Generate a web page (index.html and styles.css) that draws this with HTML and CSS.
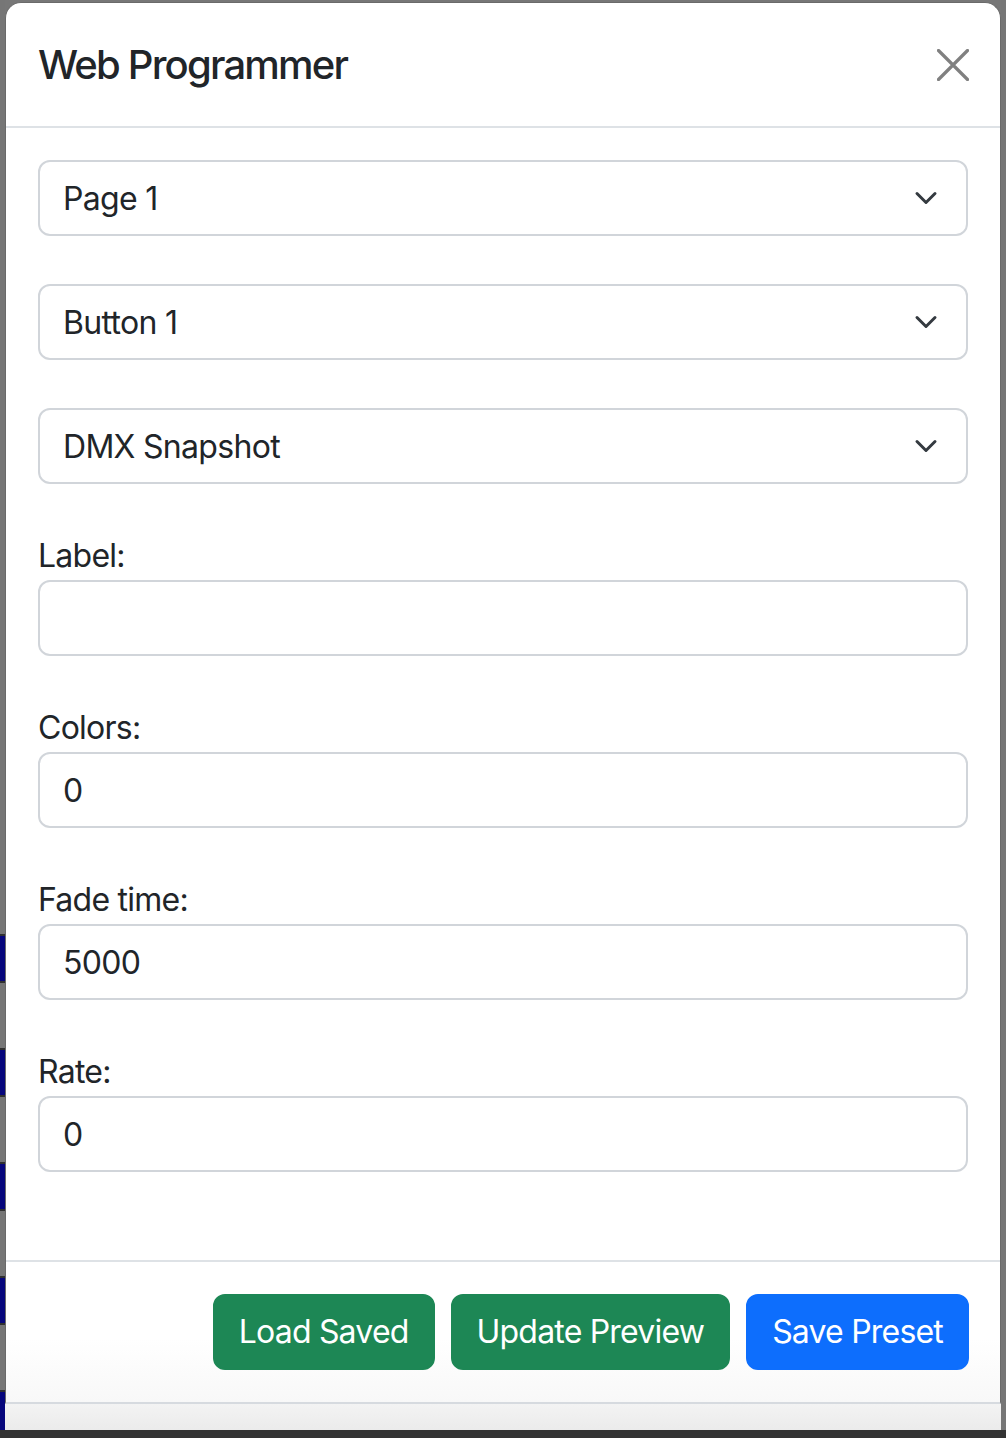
FILE: index.html
```html
<!DOCTYPE html>
<html lang="en">
<head>
<meta charset="utf-8">
<title>Web Programmer</title>
<link rel="stylesheet" href="styles.css">
</head>
<body>
<div class="screen">
  <div class="stage">
    <div class="strip strip-left"></div>
    <div class="center">
      <div class="modal">
        <div class="modal-header">
          <h5 class="modal-title">Web Programmer</h5>
          <button class="btn-close" type="button" aria-label="Close">
            <svg viewBox="0 0 32 32" width="32" height="32"><path d="M1.5 1.5 30.5 30.5M30.5 1.5 1.5 30.5" stroke="#808080" stroke-width="3.2" stroke-linecap="round" fill="none"/></svg>
          </button>
        </div>
        <div class="modal-body">
          <div class="group">
            <select class="form-select"><option>Page 1</option></select>
          </div>
          <div class="group">
            <select class="form-select"><option>Button 1</option></select>
          </div>
          <div class="group">
            <select class="form-select"><option>DMX Snapshot</option></select>
          </div>
          <div class="group">
            <label class="form-label">Label:</label>
            <input class="form-control" type="text" value="">
          </div>
          <div class="group">
            <label class="form-label">Colors:</label>
            <input class="form-control" type="text" value="0">
          </div>
          <div class="group">
            <label class="form-label">Fade time:</label>
            <input class="form-control" type="text" value="5000">
          </div>
          <div class="group last">
            <label class="form-label">Rate:</label>
            <input class="form-control" type="text" value="0">
          </div>
        </div>
        <div class="modal-footer">
          <button class="btn btn-success" type="button">Load Saved</button>
          <button class="btn btn-success" type="button">Update Preview</button>
          <button class="btn btn-primary" type="button">Save Preset</button>
        </div>
      </div>
      <div class="below"></div>
    </div>
    <div class="strip strip-right"></div>
  </div>
  <div class="taskbar"></div>
</div>
</body>
</html>
```
FILE: styles.css
```css
* { box-sizing: border-box; }

html, body {
  margin: 0;
  padding: 0;
}

body {
  width: 1006px;
  height: 1438px;
  overflow: hidden;
  background: #777777;
  font-family: Inter, "Noto Sans", "Liberation Sans", sans-serif;
  color: #212529;
}

.screen {
  display: flex;
  flex-direction: column;
  height: 1438px;
}

.stage {
  flex: 1;
  display: flex;
}

.strip {
  width: 5px;
  background-color: #767676;
}

.strip-left {
  background-image: repeating-linear-gradient(to bottom, #303030 0 2px, #06067c 2px 47px, #303030 47px 49px, #767676 49px 114px);
  background-size: 5px 500px;
  background-position: 0 934px;
  background-repeat: no-repeat;
}

.center {
  width: 996px;
  display: flex;
  flex-direction: column;
  padding-top: 2px;
}

.modal {
  background: #ffffff;
  border: 1px solid #6a6a6a;
  border-bottom: 2px solid #d6dadf;
  border-radius: 16px 16px 0 0;
}

.modal-header {
  display: flex;
  align-items: center;
  padding: 32px 31px 32px 32px;
  border-bottom: 2px solid #dee2e6;
}

.modal-title {
  margin: 0;
  font-size: 40px;
  font-weight: 500;
  line-height: 59px;
  letter-spacing: -1.8px;
}

.btn-close {
  margin-left: auto;
  width: 32px;
  height: 32px;
  padding: 0;
  border: 0;
  background: transparent;
  display: flex;
}

.modal-body {
  padding: 32px 32px 40px 32px;
}

.group {
  display: flex;
  flex-direction: column;
  margin-bottom: 48px;
}

.group.last {
  margin-bottom: 48px;
}

.form-label {
  font-size: 32px;
  line-height: 48px;
  height: 48px;
  letter-spacing: -0.75px;
}

.form-select,
.form-control {
  display: block;
  width: 100%;
  height: 76px;
  padding: 0 24px 0 23px;
  font-family: inherit;
  font-size: 32px;
  letter-spacing: -0.7px;
  color: #212529;
  background-color: #ffffff;
  border: 2px solid #d1d5da;
  border-radius: 12px;
  appearance: none;
  -webkit-appearance: none;
  outline: none;
}

.form-select {
  padding-right: 72px;
  background-image: url("data:image/svg+xml,%3csvg xmlns='http://www.w3.org/2000/svg' viewBox='0 0 16 16'%3e%3cpath fill='none' stroke='%23343a40' stroke-linecap='round' stroke-linejoin='round' stroke-width='2' d='m2 5 6 6 6-6'/%3e%3c/svg%3e");
  background-repeat: no-repeat;
  background-position: right 24px center;
  background-size: 32px 24px;
}

.modal-footer {
  display: flex;
  justify-content: flex-end;
  gap: 16px;
  padding: 32px 31px 32px 32px;
  border-top: 2px solid #dee2e6;
  background: linear-gradient(to bottom, #ffffff 0%, #ffffff 55%, #f8f8f8 100%);
}

.btn {
  height: 76px;
  padding: 0 24px;
  font-family: inherit;
  font-size: 32px;
  line-height: 48px;
  letter-spacing: -0.8px;
  color: #ffffff;
  border: 2px solid transparent;
  border-radius: 12px;
}

.btn-success {
  background: #1d8755;
  border-color: #1d8755;
}

.btn-primary {
  background: #0d6efd;
  border-color: #0d6efd;
}

.below {
  flex: 1;
  background: linear-gradient(to bottom, #f3f3f3, #ebebeb);
}

.taskbar {
  height: 8px;
  background: #333333;
}
```
